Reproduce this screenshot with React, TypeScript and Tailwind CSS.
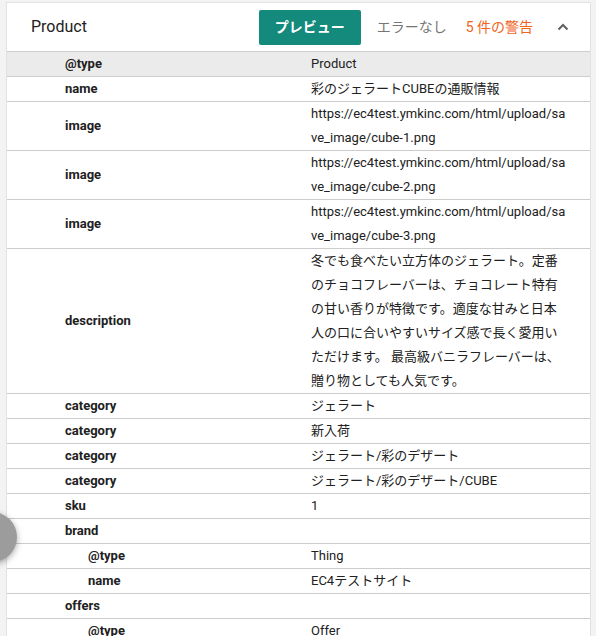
import React from "react";

type Row = { k: string; v: string; indent?: boolean; head?: boolean };

const rows: Row[] = [
  { k: "@type", v: "Product", head: true },
  { k: "name", v: "彩のジェラートCUBEの通販情報" },
  { k: "image", v: "https://ec4test.ymkinc.com/html/upload/save_image/cube-1.png" },
  { k: "image", v: "https://ec4test.ymkinc.com/html/upload/save_image/cube-2.png" },
  { k: "image", v: "https://ec4test.ymkinc.com/html/upload/save_image/cube-3.png" },
  {
    k: "description",
    v: "冬でも食べたい立方体のジェラート。定番のチョコフレーバーは、チョコレート特有の甘い香りが特徴です。適度な甘みと日本人の口に合いやすいサイズ感で長く愛用いただけます。 最高級バニラフレーバーは、贈り物としても人気です。",
  },
  { k: "category", v: "ジェラート" },
  { k: "category", v: "新入荷" },
  { k: "category", v: "ジェラート/彩のデザート" },
  { k: "category", v: "ジェラート/彩のデザート/CUBE" },
  { k: "sku", v: "1" },
  { k: "brand", v: "" },
  { k: "@type", v: "Thing", indent: true },
  { k: "name", v: "EC4テストサイト", indent: true },
  { k: "offers", v: "" },
  { k: "@type", v: "Offer", indent: true },
];

export default function App() {
  return (
    <div
      className="relative min-h-[636px] overflow-hidden bg-[#f3f3f3] pt-[2px] pl-[6px] pr-[5px] text-[#212121]"
      style={{ fontFamily: 'Roboto, "Noto Sans CJK JP", sans-serif' }}
    >
      <div className="border border-[#e2e2e2] bg-white">
        <div className="flex h-[49px] items-center border-b border-[#cccccc] pl-[24px] pr-[21px]">
          <div className="flex-1 text-[16px] text-[#212121]">Product</div>
          <button className="h-[35px] w-[102px] rounded-[2px] bg-[#138a7b] text-[14px] font-bold text-white">
            プレビュー
          </button>
          <span className="ml-[16px] text-[14px] text-[#757575]">エラーなし</span>
          <span className="ml-[19px] text-[14px] text-[#f0641e]">5 件の警告</span>
          <svg className="ml-[24px]" width="12" height="8" viewBox="0 0 12 8">
            <path d="M1.5 6.5 L6 2 L10.5 6.5" fill="none" stroke="#616161" strokeWidth="2" />
          </svg>
        </div>
        {rows.map((r, i) => (
          <div
            key={i}
            className={`flex border-b border-[#cccccc] ${r.head ? "bg-[#ebebeb]" : "bg-white"}`}
          >
            <div
              className={`flex w-[304px] shrink-0 items-center text-[13px] font-bold ${
                r.indent ? "pl-[81px]" : "pl-[58px]"
              }`}
            >
              {r.k}
            </div>
            <div className="min-h-[24px] w-[256px] break-all text-[13px] leading-[24px]">{r.v}</div>
          </div>
        ))}
      </div>
      <div className="absolute left-[-33px] top-[512px] h-[50px] w-[50px] rounded-full bg-[#9c9c9c] shadow-[0_2px_6px_rgba(0,0,0,0.35)]" />
    </div>
  );
}
